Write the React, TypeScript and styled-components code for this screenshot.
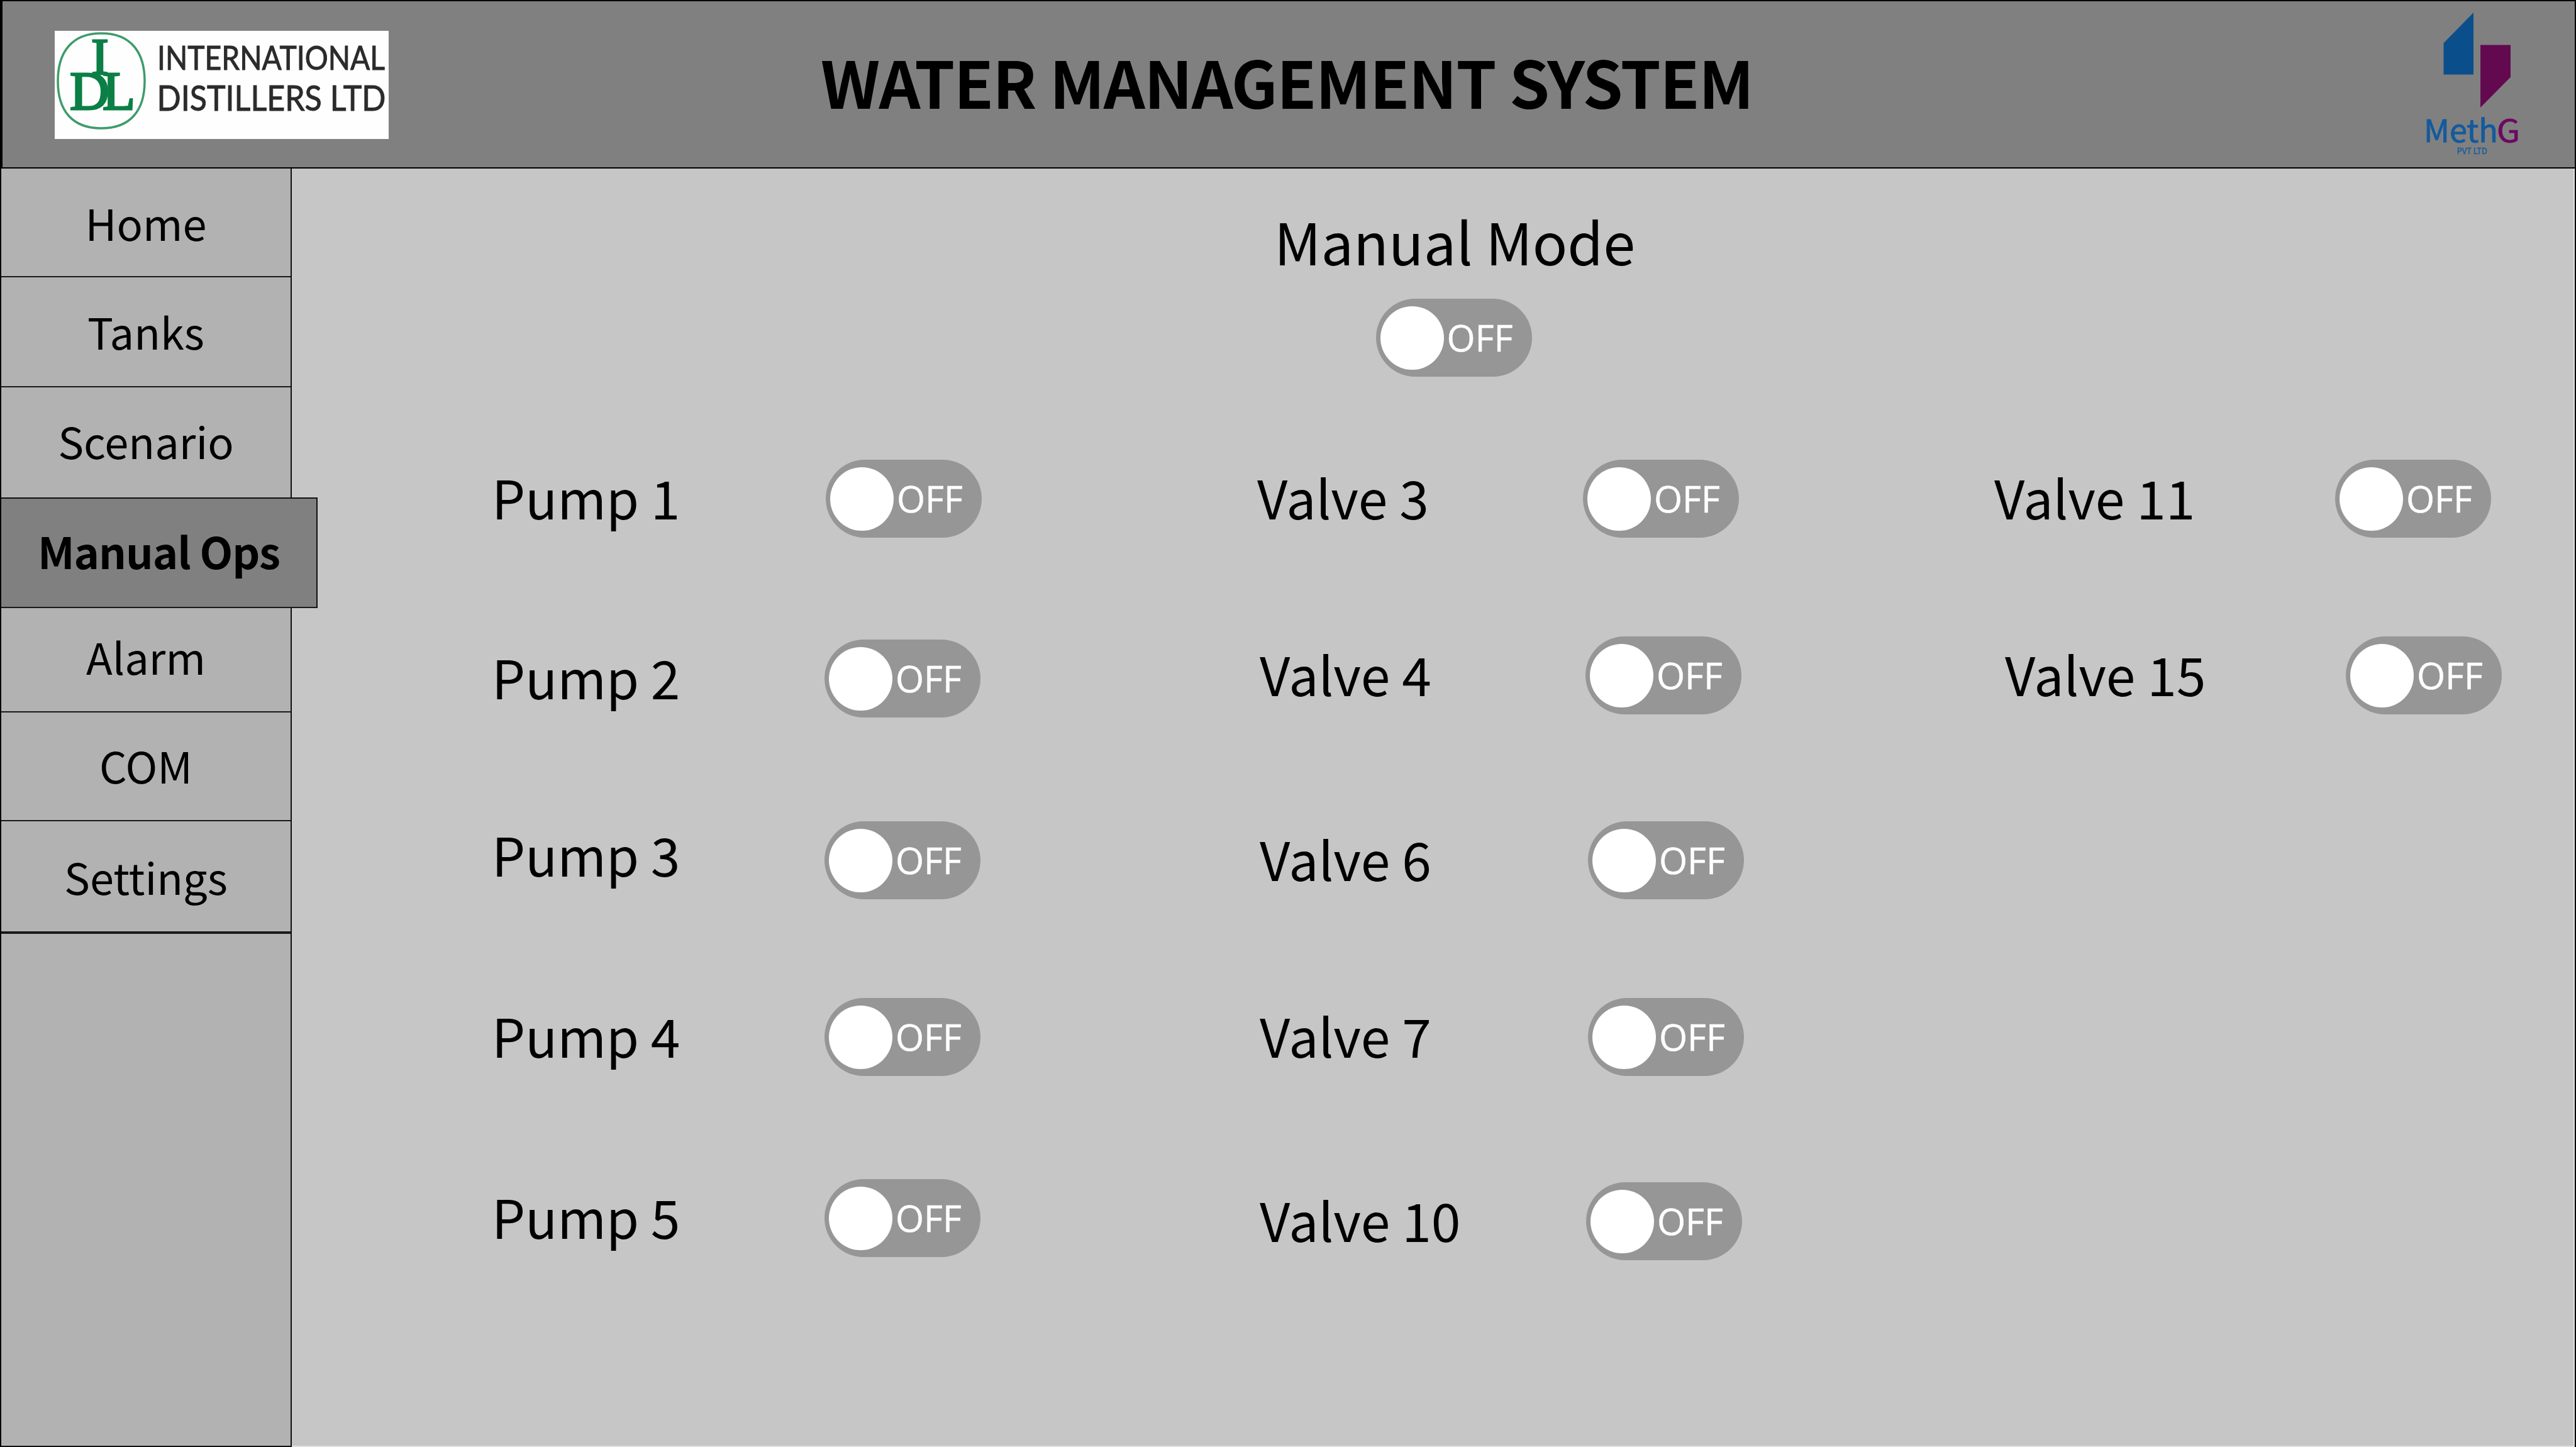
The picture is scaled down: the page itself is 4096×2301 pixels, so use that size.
import React, { useState } from "react";
import styled, { createGlobalStyle } from "styled-components";

const menus = [
  { name: "Home", height: 173, lift: 1 },
  { name: "Tanks", height: 175, lift: 3 },
  { name: "Scenario", height: 177, lift: 7 },
  { name: "Manual Ops", height: 174, lift: 9 },
  { name: "Alarm", height: 166, lift: 13 },
  { name: "COM", height: 173, lift: 5 },
  { name: "Settings", height: 179, lift: 1 },
];

const pumps = [
  { name: "Pump 1", indent: 0, gap: 0, extra: 2 },
  { name: "Pump 2", indent: 0, gap: 162 },
  { name: "Pump 3", indent: 0, gap: 165, raise: 13 },
  { name: "Pump 4", indent: 0, gap: 157 },
  { name: "Pump 5", indent: 0, gap: 164 },
];

const valves = [
  { name: "Valve 3", indent: 0, gap: 0 },
  { name: "Valve 4", indent: 4, gap: 157 },
  { name: "Valve 6", indent: 4, gap: 170, extra: 4 },
  { name: "Valve 7", indent: 4, gap: 157, extra: 4 },
  { name: "Valve 10", indent: 4, gap: 169, extra: 1 },
];

const moreValves = [
  { name: "Valve 11", indent: 0, gap: 0 },
  { name: "Valve 15", indent: 17, gap: 157 },
];

const Switch = () => {
  const [on, setOn] = useState(false);
  return (
    <Toggle $on={on} onClick={() => setOn(!on)}>
      <Knob />
      <ToggleText>{on ? "ON" : "OFF"}</ToggleText>
    </Toggle>
  );
};

const Controls = ({ items, labelWidth }) => (
  <ControlColumn>
    {items.map((item) => (
      <ControlRow key={item.name} $gap={item.gap} $indent={item.indent}>
        <ControlLabel $width={labelWidth + (item.extra || 0)} $raise={item.raise || 0}>
          {item.name}
        </ControlLabel>
        <Switch />
      </ControlRow>
    ))}
  </ControlColumn>
);

const DistillersLogo = () => (
  <LogoBox>
    <svg width="531" height="172" viewBox="0 0 531 172">
      <path
        d="M74 4 C121 4 143 34 143 80 C143 126 121 155 74 155 C27 155 5 126 5 80 C5 34 27 4 74 4 Z"
        fill="none"
        stroke="#3f9b6c"
        strokeWidth="3.5"
      />
      <g fill="#0b7f45" fontFamily="Liberation Serif, serif" stroke="#0b7f45" strokeWidth="3">
        <text x="58" y="69" fontSize="83">I</text>
        <text x="24" y="125" fontSize="87">D</text>
        <text x="76" y="125" fontSize="87" textLength="52" lengthAdjust="spacingAndGlyphs">L</text>
      </g>
      <g fill="#2b2b2b" stroke="#2b2b2b" strokeWidth="1" fontFamily="Lato, sans-serif">
        <text x="163" y="61.500" fontSize="53" textLength="362" lengthAdjust="spacingAndGlyphs">
          INTERNATIONAL
        </text>
        <text x="162.500" y="126.500" fontSize="57" textLength="364" lengthAdjust="spacingAndGlyphs">
          DISTILLERS LTD
        </text>
      </g>
    </svg>
  </LogoBox>
);

const MethGLogo = () => (
  <LogoEnd>
    <svg width="160" height="240" viewBox="50 14 160 240">
      <polygon points="85.500,68.500 133,20 133,118.500 85.500,118.500" fill="#0a4f8b" />
      <polygon points="144,71.500 192,71.500 192,122.500 144,171" fill="#620950" />
      <g fontFamily="Noto Sans CJK SC, sans-serif">
        <text x="54" y="226" fontSize="49" fill="#125a9d" stroke="#125a9d" strokeWidth="0.8" textLength="118" lengthAdjust="spacingAndGlyphs">
          Meth
        </text>
        <text x="170" y="226" fontSize="49" fill="#6c0860" stroke="#6c0860" strokeWidth="0.8" textLength="37" lengthAdjust="spacingAndGlyphs">
          G
        </text>
        <text x="106.500" y="245" fontSize="13" fill="#125a9d" stroke="#125a9d" strokeWidth="0.3" textLength="48" lengthAdjust="spacingAndGlyphs">
          PVT LTD
        </text>
      </g>
    </svg>
  </LogoEnd>
);

const App = () => {
  const [current, setCurrent] = useState("Manual Ops");

  return (
    <Page>
      <GlobalStyle />
      <Header>
        <DistillersLogo />
        <Title>WATER MANAGEMENT SYSTEM</Title>
        <MethGLogo />
      </Header>
      <Body>
        <Sidebar>
          {menus.map((menu) => (
            <MenuItem
              key={menu.name}
              $height={menu.height}
              $lift={menu.lift}
              $active={menu.name === current}
              $last={menu.name === "Settings"}
              onClick={() => setCurrent(menu.name)}
            >
              {menu.name}
            </MenuItem>
          ))}
        </Sidebar>
        <Main>
          <ModeContainer>
            <ModeTitle>Manual Mode</ModeTitle>
            <Switch />
          </ModeContainer>
          <ControlContainer>
            <Controls items={pumps} labelWidth={529} />
            <Controls items={valves} labelWidth={518} />
            <Controls items={moreValves} labelWidth={542} />
          </ControlContainer>
        </Main>
      </Body>
    </Page>
  );
};

export default App;

const GlobalStyle = createGlobalStyle`
  * {
    box-sizing: border-box;
  }
  body {
    margin: 0;
    font-family: "Noto Sans CJK SC", "Noto Sans", sans-serif;
    color: #000000;
  }
`;

const Page = styled.div`
  width: 4096px;
  height: 2301px;
  display: flex;
  flex-direction: column;
  overflow: hidden;
  background-color: #c6c6c6;
`;

const Header = styled.header`
  height: 268px;
  padding: 0 84px 0 83px;
  border: 2px solid #000000;
  border-left-width: 4px;
  background-color: #808080;
  display: grid;
  grid-template-columns: 531px 1fr 531px;
  align-items: center;
`;

const LogoBox = styled.div`
  width: 531px;
  height: 172px;
  margin-top: 2px;
  background-color: #fefefe;
  display: flex;
`;

const LogoEnd = styled.div`
  display: flex;
  justify-content: flex-end;
`;

const Title = styled.h1`
  margin: 0;
  padding: 0 5px 11px 0;
  font-size: 103px;
  font-weight: bold;
  letter-spacing: -1.65px;
  line-height: 140px;
  text-align: center;
  white-space: nowrap;
`;

const Body = styled.div`
  flex: 1;
  display: flex;
  border-left: 2px solid #000000;
  border-right: 2px solid #000000;
`;

const Sidebar = styled.nav`
  width: 462px;
  border-right: 2px solid #111111;
  border-bottom: 2px solid #111111;
  background-color: #b2b2b2;
  display: flex;
  flex-direction: column;
`;

const MenuItem = styled.div<{
  $height: number;
  $lift: number;
  $active: boolean;
  $last: boolean;
}>`
  flex: none;
  width: 460px;
  height: ${(props) => props.$height}px;
  padding-bottom: ${(props) => props.$lift}px;
  border-bottom: ${(props) => (props.$last ? "4px" : "2px")} solid #1a1a1a;
  ${(props) =>
    props.$active &&
    `
    width: 503px;
    height: ${props.$height + 2}px;
    margin-top: -2px;
    border-top: 2px solid #111111;
    border-right: 2px solid #111111;
    background-color: #808080;
    font-weight: bold;
    letter-spacing: -1px;
  `}
  display: flex;
  align-items: center;
  justify-content: center;
  font-size: 68.6px;
  line-height: 100px;
  white-space: nowrap;
  cursor: pointer;
`;

const Main = styled.main`
  flex: 1;
  border-right: 2px solid #e0e0e0;
  border-bottom: 2px solid #e0e0e0;
  display: flex;
  flex-direction: column;
`;

const ModeContainer = styled.div`
  height: 463px;
  padding: 53px 0 0 67px;
  display: flex;
  flex-direction: column;
  align-items: center;
`;

const ModeTitle = styled.div`
  height: 154px;
  padding-left: 3px;
  font-size: 91.8px;
  line-height: 122px;
`;

const ControlContainer = styled.div`
  padding-left: 318px;
  display: flex;
`;

const ControlColumn = styled.div`
  width: 1217px;
  &:last-child {
    width: auto;
    margin-left: -45px;
  }
`;

const ControlRow = styled.div<{ $gap: number; $indent: number }>`
  margin-top: ${(props) => props.$gap}px;
  padding-left: ${(props) => props.$indent}px;
  height: 124px;
  display: flex;
`;

const ControlLabel = styled.div<{ $width: number; $raise: number }>`
  width: ${(props) => props.$width}px;
  font-size: 84px;
  line-height: ${(props) => 117 - props.$raise}px;
  white-space: nowrap;
`;

const Toggle = styled.div<{ $on: boolean }>`
  width: 248px;
  height: 124px;
  padding: 0 7px;
  border-radius: 62px;
  background-color: ${(props) => (props.$on ? "#4c9a5e" : "#969696")};
  display: flex;
  flex-direction: ${(props) => (props.$on ? "row-reverse" : "row")};
  align-items: center;
  gap: 5px;
  cursor: pointer;
`;

const Knob = styled.div`
  width: 101px;
  height: 101px;
  border-radius: 50%;
  background-color: #ffffff;
`;

const ToggleText = styled.span`
  color: #ffffff;
  font-family: "Open Sans", sans-serif;
  font-size: 58px;
  line-height: 80px;
  -webkit-text-stroke: 0.5px #ffffff;
`;
